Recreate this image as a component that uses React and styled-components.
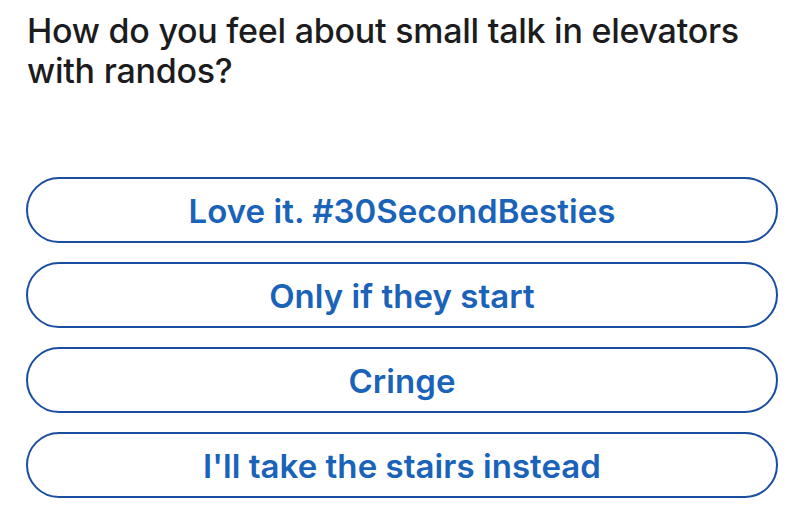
import React from 'react'
import styled, { createGlobalStyle } from 'styled-components'

const Global = createGlobalStyle`
  html, body {
    margin: 0;
    padding: 0;
    background: #ffffff;
  }
  body {
    font-family: Inter, "Noto Sans", "Liberation Sans", sans-serif;
    -webkit-font-smoothing: antialiased;
  }
`

const Page = styled.div`
  width: 800px;
  height: 505px;
  box-sizing: border-box;
  padding: 11px 22px 0 26px;
  background: #fff;
`

const Question = styled.h1`
  margin: 0 0 0 1px;
  font-size: 34px;
  line-height: 40px;
  font-weight: 500;
  color: #1c1c1e;
  letter-spacing: -0.25px;
`

const Options = styled.div`
  display: flex;
  flex-direction: column;
  gap: 19px;
  margin-top: 86px;
`

const Option = styled.button`
  display: flex;
  align-items: center;
  justify-content: center;
  width: 752px;
  height: 66px;
  box-sizing: border-box;
  border: 2px solid #1a4e9e;
  border-radius: 33px;
  background: #fff;
  color: #1a63b9;
  font-family: inherit;
  font-size: 33px;
  font-weight: 600;
  letter-spacing: 0.05px;
  padding: 2px 0 0;
  cursor: pointer;
`

const choices = [
  'Love it. #30SecondBesties',
  'Only if they start',
  'Cringe',
  "I'll take the stairs instead",
]

const App = () => {
  return (
    <Page>
      <Global />
      <Question>
        How do you feel about small talk in elevators
        <br />
        with randos?
      </Question>
      <Options>
        {choices.map(text => (
          <Option key={text}>{text}</Option>
        ))}
      </Options>
    </Page>
  )
}

export default App
